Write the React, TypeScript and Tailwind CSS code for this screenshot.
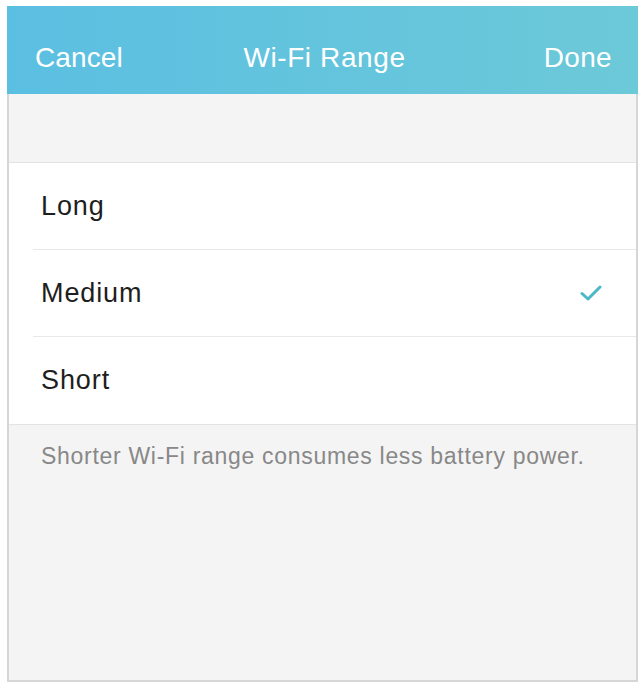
// Wi-Fi range picker screen

import React, { useState } from 'react';

const options = ['Long', 'Medium', 'Short'];

function Check() {
  return (
    <svg width="22" height="16" viewBox="0 0 22 16" fill="none">
      <path d="M2 8.5 L8 14 L20 2" stroke="#4bb8c8" strokeWidth="3" strokeLinecap="round" strokeLinejoin="round" />
    </svg>
  );
}

export default function App() {
  const [selected, setSelected] = useState('Medium');

  return (
    <div className="w-[640px] h-[682px] bg-white pt-[6px] pl-[7px] pr-[2px] pb-0 font-['Helvetica','Liberation_Sans','Inter',sans-serif]">
      <div className="h-full flex flex-col bg-[#f4f4f4] border-l-2 border-r-2 border-b-2 border-[#d6d6d6]">
        <div className="h-[88px] -ml-[2px] -mr-[2px] grid grid-cols-3 items-center pt-[15px] pl-[28px] pr-[26px] bg-gradient-to-r from-[#5bbfe2] to-[#6cc9d8] text-white text-[28px]">
          <button type="button" className="justify-self-start tracking-[0.1px]">Cancel</button>
          <div className="justify-self-center whitespace-nowrap tracking-[0.6px] pl-[2px]">Wi-Fi Range</div>
          <button type="button" className="justify-self-end tracking-[0.3px]">Done</button>
        </div>

        <div className="h-[68px]" />

        <div className="bg-white border-t border-b border-[#e4e4e4]">
          {options.map((opt, i) => (
            <div key={opt} className="pl-[24px]">
              <button
                type="button"
                onClick={() => setSelected(opt)}
                className={`w-full h-[87px] flex items-center justify-between pr-[34px] text-left ${i < options.length - 1 ? 'border-b border-[#e8e8e8]' : ''}`}
              >
                <span className="pl-[8px] text-[27px] tracking-[0.9px] text-[#1e1e1e]">{opt}</span>
                {selected === opt && <Check />}
              </button>
            </div>
          ))}
        </div>

        <p className="pl-[32px] pt-[14px] text-[23px] tracking-[0.7px] text-[#888888]">
          Shorter Wi-Fi range consumes less battery power.
        </p>
      </div>
    </div>
  );
}
